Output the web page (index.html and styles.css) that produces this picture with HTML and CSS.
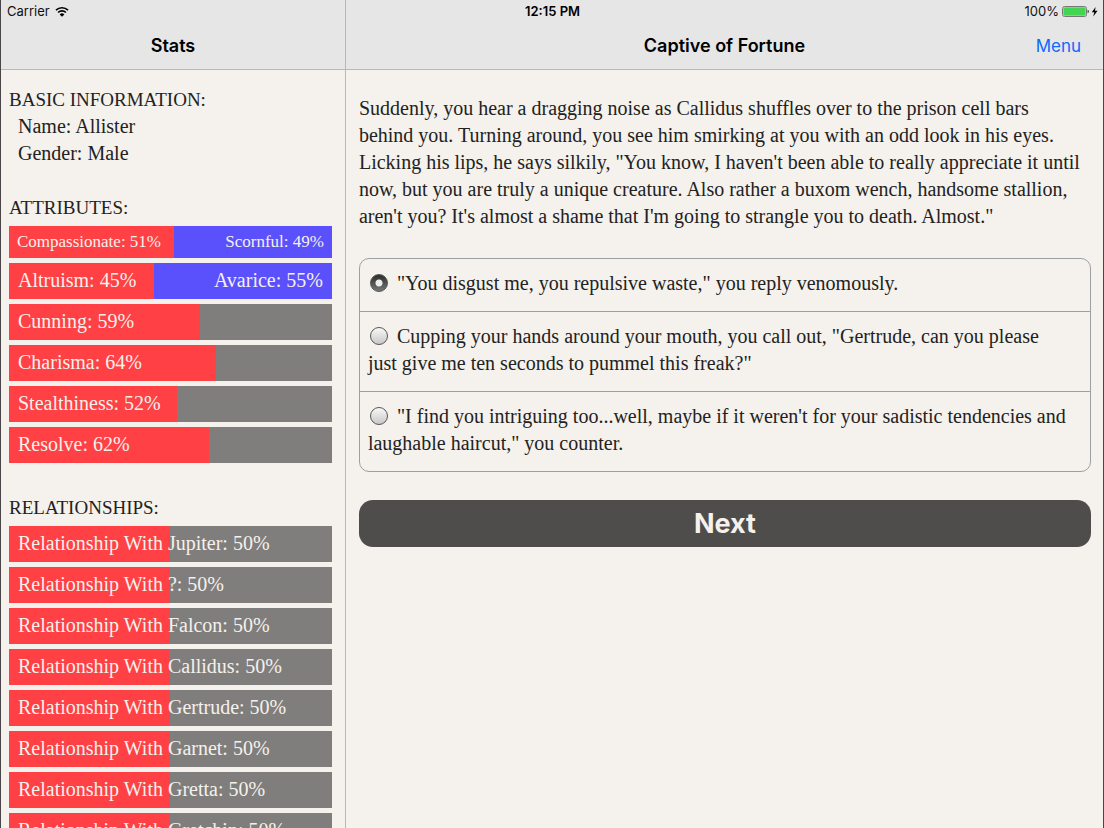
FILE: index.html
```html
<!DOCTYPE html>
<html lang="en">
<head>
    <meta charset="UTF-8">
    <meta name="viewport" content="width=device-width, initial-scale=1.0">
    <title>Captive of Fortune</title>
    <link rel="stylesheet" href="styles.css">
</head>
<body>
    <!-- Status bar, lies over both panes -->
    <div class="status-bar">
        <div class="status-left">
            <span>Carrier</span>
            <svg class="wifi" width="14" height="11" viewBox="0 0 14 11" aria-hidden="true">
                <path d="M1 4.2a8.6 8.6 0 0 1 12 0M3.1 6.5a5.6 5.6 0 0 1 7.8 0" fill="none" stroke="#000" stroke-width="1.7"/>
                <path d="M7 10.8L4.7 8.4a3.3 3.3 0 0 1 4.6 0z" fill="#000"/>
            </svg>
        </div>
        <div class="status-time">12:15 PM</div>
        <div class="status-right">
            <span>100%</span>
            <svg width="36" height="12" viewBox="0 0 36 12" aria-hidden="true">
                <rect x=".5" y=".5" width="24" height="10" rx="2" fill="#fff" stroke="#777"/>
                <rect x="1.3" y="1.3" width="22.4" height="8.4" rx="1" fill="#43d551"/>
                <path d="M25.6 3.8c1.8.4 1.8 3 0 3.4z" fill="#333"/>
                <path d="M33.6 1L29.8 6.2h2.5L31.2 10.4 35.6 4.8H33z" fill="#000"/>
            </svg>
        </div>
    </div>

    <div class="split-view">
        <aside class="pane stats-pane">
            <header class="nav-bar">
                <h1>Stats</h1>
            </header>
            <div class="stats-content">
                <section>
                    <h2>BASIC INFORMATION:</h2>
                    <p class="info">Name: Allister</p>
                    <p class="info">Gender: Male</p>
                </section>

                <section>
                    <h2>ATTRIBUTES:</h2>
                    <div class="bars">
                        <div class="bar opposed small"><div class="fill" style="width: 51%"></div><span>Compassionate: 51%</span><span>Scornful: 49%</span></div>
                        <div class="bar opposed"><div class="fill" style="width: 45%"></div><span>Altruism: 45%</span><span>Avarice: 55%</span></div>
                        <div class="bar"><div class="fill" style="width: 59%"></div><span>Cunning: 59%</span></div>
                        <div class="bar"><div class="fill" style="width: 64%"></div><span>Charisma: 64%</span></div>
                        <div class="bar"><div class="fill" style="width: 52%"></div><span>Stealthiness: 52%</span></div>
                        <div class="bar"><div class="fill" style="width: 62%"></div><span>Resolve: 62%</span></div>
                    </div>
                </section>

                <section>
                    <h2>RELATIONSHIPS:</h2>
                    <div class="bars">
                        <div class="bar"><div class="fill" style="width: 50%"></div><span>Relationship With Jupiter: 50%</span></div>
                        <div class="bar"><div class="fill" style="width: 50%"></div><span>Relationship With ?: 50%</span></div>
                        <div class="bar"><div class="fill" style="width: 50%"></div><span>Relationship With Falcon: 50%</span></div>
                        <div class="bar"><div class="fill" style="width: 50%"></div><span>Relationship With Callidus: 50%</span></div>
                        <div class="bar"><div class="fill" style="width: 50%"></div><span>Relationship With Gertrude: 50%</span></div>
                        <div class="bar"><div class="fill" style="width: 50%"></div><span>Relationship With Garnet: 50%</span></div>
                        <div class="bar"><div class="fill" style="width: 50%"></div><span>Relationship With Gretta: 50%</span></div>
                        <div class="bar"><div class="fill" style="width: 50%"></div><span>Relationship With Gretchin: 50%</span></div>
                    </div>
                </section>
            </div>
        </aside>

        <main class="pane">
            <header class="nav-bar">
                <h1>Captive of Fortune</h1>
                <a class="menu-link" href="#">Menu</a>
            </header>
            <div class="story-content">
                <p class="story">
                    Suddenly, you hear a dragging noise as Callidus shuffles over to the prison cell bars<br>
                    behind you. Turning around, you see him smirking at you with an odd look in his eyes.<br>
                    Licking his lips, he says silkily, "You know, I haven't been able to really appreciate it until<br>
                    now, but you are truly a unique creature. Also rather a buxom wench, handsome stallion,<br>
                    aren't you? It's almost a shame that I'm going to strangle you to death. Almost."
                </p>

                <form>
                    <div class="choices">
                        <label for="choice1"><input type="radio" name="choice" id="choice1" checked>"You disgust me, you repulsive waste," you reply venomously.</label>
                        <label for="choice2"><input type="radio" name="choice" id="choice2">Cupping your hands around your mouth, you call out, "Gertrude, can you please<br>just give me ten seconds to pummel this freak?"</label>
                        <label for="choice3"><input type="radio" name="choice" id="choice3">"I find you intriguing too...well, maybe if it weren't for your sadistic tendencies and<br>laughable haircut," you counter.</label>
                    </div>
                    <button type="button" class="next">Next</button>
                </form>
            </div>
        </main>
    </div>
</body>
</html>
```
FILE: styles.css
```css
* {
    box-sizing: border-box;
}

body {
    margin: 0;
    height: 100vh;
    overflow: hidden;
    border: solid #4a4648;
    border-width: 0 1px;
    background-color: #f5f1ec;
    color: #222;
    font-family: Palatino, "Palatino Linotype", "Liberation Serif", serif;
    font-size: 20px;
    line-height: 27px;
}

h1, h2, p {
    margin: 0;
    font-weight: normal;
}

/* Status bar */
.status-bar {
    position: absolute;
    z-index: 1;
    top: 0;
    left: 0;
    right: 0;
    display: grid;
    grid-template-columns: 1fr auto 1fr;
    align-items: center;
    padding: 0 6px 0 7px;
    font-family: Inter, sans-serif;
    font-size: 13px;
    line-height: 23px;
    color: #111;
}

.status-left, .status-right {
    display: flex;
    align-items: center;
    gap: 5px;
}

.status-right {
    justify-content: flex-end;
    gap: 3px;
}

.status-time {
    font-weight: 600;
    color: #000;
}

/* Panes */
.split-view {
    display: grid;
    grid-template-columns: 31.3% 1fr;
    height: 100%;
}

.pane {
    min-width: 0;
    overflow: hidden;
}

.stats-pane {
    border-right: 1px solid #bab8b7;
}

.nav-bar {
    position: relative;
    height: 70px;
    padding-top: 23px;
    border-bottom: 1px solid #bab8b7;
    background-color: #e6e6e7;
    font-family: Inter, sans-serif;
    font-size: 17px;
    line-height: 46px;
    text-align: center;
}

.nav-bar h1 {
    font-size: 18px;
    font-weight: 600;
    color: #000;
}

.menu-link {
    position: absolute;
    right: 22px;
    bottom: 0;
    color: #0f68fb;
    text-decoration: none;
}

/* Stats */
.stats-content {
    display: flex;
    flex-direction: column;
    gap: 27px;
    padding: 16px 13px 0 8px;
}

.stats-content h2 {
    font-size: 19px;
}

.info {
    padding-left: 9px;
}

.bars {
    display: flex;
    flex-direction: column;
    gap: 5px;
    margin: 5px 0 4px;
}

.bar {
    position: relative;
    display: flex;
    justify-content: space-between;
    padding: 4px 9px 5px;
    background-color: #807e7c;
    color: #f5f1ec;
}

.bar.opposed {
    background-color: #5a50fc;
}

.bar.small {
    padding: 2px 8px 3px;
    font-size: 17px;
}

.bar span {
    position: relative;
}

.fill {
    position: absolute;
    top: 0;
    bottom: 0;
    left: 0;
    background-color: #ff4044;
}

/* Story */
.story-content {
    padding: 25px 12px 0 13px;
}

.choices {
    margin-top: 28px;
    border: 1px solid #9da0a3;
    border-radius: 10px;
}

.choices label {
    display: block;
    padding: 11px 8px 14px;
}

.choices label + label {
    border-top: 1px solid #9da0a3;
}

.choices input {
    appearance: none;
    width: 18px;
    height: 18px;
    margin: 0 9px 0 2px;
    border: 1px solid #555;
    border-radius: 50%;
    background: linear-gradient(#f8f8f8, #c8c8c8);
    vertical-align: -2px;
}

.choices input:checked {
    background: radial-gradient(circle, #eee 3px, transparent 4px), linear-gradient(#2c2c2c, #777);
}

.next {
    display: block;
    width: 100%;
    height: 47px;
    margin-top: 28px;
    border: none;
    border-radius: 14px;
    background-color: #4e4d4b;
    color: #f5f1ec;
    font-family: Inter, sans-serif;
    font-size: 27px;
    font-weight: 700;
}
```
